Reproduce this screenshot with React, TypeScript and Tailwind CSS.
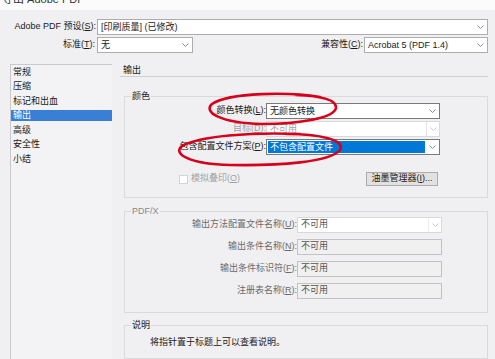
import clsx from "clsx";

const font = "font-['Liberation_Sans','Noto_Sans_CJK_SC',sans-serif]";

function Chevron({ light }: { light?: boolean }) {
  return (
    <svg width="7" height="4" viewBox="0 0 7 4" className="shrink-0">
      <path
        d="M0.5 0.5 L3.5 3.5 L6.5 0.5"
        fill="none"
        stroke={light ? "#c4c4c4" : "#808080"}
        strokeWidth="0.9"
      />
    </svg>
  );
}

type SelectProps = {
  className: string;
  text: string;
  disabled?: boolean;
  selected?: boolean;
  dark?: boolean;
};

function Select({ className, text, disabled, selected, dark }: SelectProps) {
  return (
    <div
      className={clsx(
        "flex h-[16px] items-center border bg-white",
        disabled ? "border-[#d9d9d9]" : dark ? "border-[#7a7a7a]" : "border-[#adadad]",
        className
      )}
    >
      <div className="flex h-full min-w-0 flex-1 items-center px-[1px]">
        <span
          className={clsx(
            "flex h-[12px] items-center px-[2px] leading-[12px]",
            selected && "flex-1 bg-[#0078d7] text-white",
            disabled ? "text-[#a3a3a3]" : !selected && "text-[#1a1a1a]"
          )}
        >
          {text}
        </span>
      </div>
      <div
        className={clsx(
          "flex h-full w-[13px] items-center justify-center",
          disabled && "border-l border-[#e3e3e3]"
        )}
      >
        <Chevron light={disabled} />
      </div>
    </div>
  );
}

function Field({ text }: { text: string }) {
  return (
    <div className="flex h-[16px] w-[145px] items-center border border-[#c2c2c2] bg-[#f0f0f0] px-[3px] text-[#555]">
      {text}
    </div>
  );
}

const sections = ["常规", "压缩", "标记和出血", "输出", "高级", "安全性", "小结"];

export default function App() {
  return (
    <div
      className={clsx(
        "relative flex h-[359px] w-[495px] flex-col overflow-hidden bg-[#f0eff1] text-[9px] text-[#1a1a1a]",
        font
      )}
    >
      {/* window title, cut off at the top */}
      <div className="h-[10px] overflow-hidden bg-[#fbfbfb]">
        <div className="-mt-[7px] pl-[2px] text-[11px] leading-[13px] text-[#333]">导出 Adobe PDF</div>
      </div>

      {/* preset rows */}
      <div className="mt-[9px] flex flex-col gap-[2px]">
        <div className="flex items-center">
          <div className="w-[97px] pr-[1px] text-right">
            Adobe PDF 预设(<span className="underline">S</span>):
          </div>
          <Select className="w-[391px]" text="[印刷质量] (已修改)" />
        </div>
        <div className="flex items-center">
          <div className="w-[97px] pr-[2px] text-right">
            标准(<span className="underline">T</span>):
          </div>
          <Select className="w-[96px]" text="无" />
          <div className="flex-1 pr-[1px] text-right">
            兼容性(<span className="underline">C</span>):
          </div>
          <Select className="mr-[7px] w-[124px]" text="Acrobat 5 (PDF 1.4)" />
        </div>
      </div>

      {/* body */}
      <div className="mt-[11px] flex min-h-0 flex-1 pl-[10px]">
        <div className="w-[102px] border border-r-0 border-b-0 border-[#c9c9cd] bg-[#f3f2f4]">
          {sections.map((s) => (
            <div key={s} className="flex h-[14.5px] items-center">
              <div
                className={clsx(
                  "flex h-[11px] w-full items-center pl-[2px] leading-[11px]",
                  s === "输出" && "bg-[#3a7fd6] text-white"
                )}
              >
                {s}
              </div>
            </div>
          ))}
        </div>

        <div className="ml-[8px] flex w-[368px] flex-col">
          <div className="h-[13px] border-b border-[#cfcfd2] pl-[3px] leading-[12px]">输出</div>

          <fieldset className="ml-[4px] mt-[14px] w-[364px] border border-[#dadada] pb-[11px] pt-[2px]">
            <legend className="ml-[6px] px-[1px] leading-[10px]">颜色</legend>
            <div className="flex flex-col gap-[2px]">
              <div className="flex items-center">
                <div className="w-[141px] text-right">
                  颜色转换(<span className="underline">L</span>):
                </div>
                <Select className="w-[174px]" text="无颜色转换" dark />
              </div>
              <div className="flex items-center">
                <div className="w-[141px] text-right text-[#a3a3a3]">
                  目标(<span className="underline">D</span>):
                </div>
                <Select className="w-[174px]" text="不可用" disabled />
              </div>
              <div className="flex items-center">
                <div className="w-[141px] text-right">
                  包含配置文件方案(<span className="underline">P</span>):
                </div>
                <Select className="w-[174px]" text="不包含配置文件" selected dark />
              </div>
            </div>
            <div className="mt-[17px] flex items-center">
              <div className="ml-[54px] h-[9px] w-[9px] border border-[#d4d4d4] bg-white" />
              <span className="ml-[3px] text-[#a3a3a3]">
                模拟叠印(<span className="underline">O</span>)
              </span>
              <div className="flex-1" />
              <div className="mr-[49px] flex h-[14px] w-[72px] items-center justify-center border border-[#adadad] bg-[#e1e1e1]">
                油墨管理器(<span className="underline">I</span>)...
              </div>
            </div>
          </fieldset>

          <fieldset className="ml-[4px] mt-[8px] w-[364px] border border-[#dadada] pb-[13px] pt-[1px] text-[#6b6b6b]">
            <legend className="ml-[6px] px-[1px] leading-[10px] text-[#8a8a8a]">PDF/X</legend>
            <div className="flex flex-col gap-[6px]">
              <div className="flex items-center">
                <div className="w-[172px] text-right">
                  输出方法配置文件名称(<span className="underline">U</span>):
                </div>
                <div className="flex h-[16px] w-[145px] items-center border border-[#d9d9d9] bg-white">
                  <span className="flex-1 px-[3px] text-[#555]">不可用</span>
                  <div className="flex h-full w-[13px] items-center justify-center border-l border-[#ececec]">
                    <Chevron light />
                  </div>
                </div>
              </div>
              <div className="flex items-center">
                <div className="w-[172px] text-right">
                  输出条件名称(<span className="underline">N</span>):
                </div>
                <Field text="不可用" />
              </div>
              <div className="flex items-center">
                <div className="w-[172px] text-right">
                  输出条件标识符(<span className="underline">F</span>):
                </div>
                <Field text="不可用" />
              </div>
              <div className="flex items-center">
                <div className="w-[172px] text-right">
                  注册表名称(<span className="underline">R</span>):
                </div>
                <Field text="不可用" />
              </div>
            </div>
          </fieldset>

          <fieldset className="ml-[4px] mt-[7px] h-[60px] w-[364px] border border-[#dadada] pt-[6px]">
            <legend className="ml-[6px] px-[1px] leading-[10px]">说明</legend>
            <div className="pl-[25px]">将指针置于标题上可以查看说明。</div>
          </fieldset>
        </div>
      </div>

      {/* red hand-drawn annotations */}
      <svg className="pointer-events-none absolute left-0 top-0" width="495" height="359" viewBox="0 0 495 359">
        <path
          d="M320 97 C290 92 230 92 212 104 C203 112 220 123 262 124 C300 124 334 118 336 108 C337 100 322 96 296 95"
          fill="none"
          stroke="#d7001b"
          strokeWidth="2.6"
          strokeLinecap="round"
        />
        <path
          d="M300 134 C250 132 200 136 182 146 C172 154 190 164 230 165 C280 166 330 162 340 150 C346 140 320 134 286 134"
          fill="none"
          stroke="#d7001b"
          strokeWidth="2.6"
          strokeLinecap="round"
        />
      </svg>
    </div>
  );
}
